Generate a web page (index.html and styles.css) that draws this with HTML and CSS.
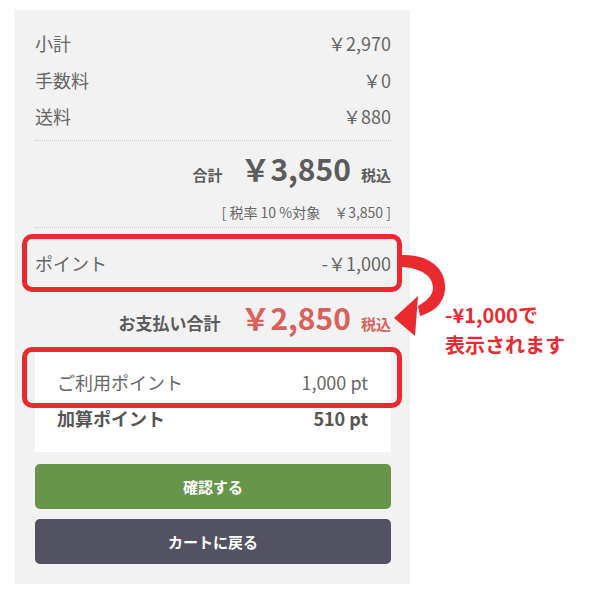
FILE: index.html
```html
<!DOCTYPE html>
<html lang="ja">
<head>
  <meta charset="UTF-8">
  <meta name="viewport" content="width=device-width, initial-scale=1.0">
  <title>ご注文内容</title>
  <link rel="stylesheet" href="styles.css">
</head>
<body>

  <div class="page">
    <div class="summary">
      <div class="row"><span>小計</span><span>￥2,970</span></div>
      <div class="row"><span>手数料</span><span>￥0</span></div>
      <div class="row"><span>送料</span><span>￥880</span></div>

      <div class="divider"></div>

      <div class="total">
        <span class="total-label">合計</span>
        <span class="total-price">￥3,850</span>
        <span class="total-tax">税込</span>
      </div>
      <p class="tax-note">[ 税率 10 %対象　￥3,850 ]</p>

      <div class="divider"></div>

      <div class="row point-row marked"><span>ポイント</span><span>-￥1,000</span></div>

      <div class="total pay">
        <span class="total-label">お支払い合計</span>
        <span class="total-price">￥2,850</span>
        <span class="total-tax">税込</span>
      </div>

      <div class="point-box">
        <div class="row used-row marked"><span>ご利用ポイント</span><span>1,000 pt</span></div>
        <div class="row strong"><span>加算ポイント</span><span>510 pt</span></div>
      </div>

      <div class="actions">
        <button class="btn btn-confirm">確認する</button>
        <button class="btn btn-back">カートに戻る</button>
      </div>
    </div>

    <svg class="arrow" width="60" height="90" viewBox="390 250 60 90">
      <path d="M402,255 C428,254 447,268 445,290 C443,305 433,312 420,316 L418,306 C427,301 433,295 433,288 C433,276 421,268 402,267 Z" fill="#ea2a2f"/>
      <path d="M394,318 L418,296 L415,336 Z" fill="#ea2a2f"/>
    </svg>

    <p class="note">-¥1,000で<br>表示されます</p>
  </div>

</body>
</html>
```

FILE: styles.css
```css
* {
  margin: 0;
  padding: 0;
  box-sizing: border-box;
}

body {
  background: #fff;
  font-family: "Noto Sans CJK JP", "Noto Sans", sans-serif;
  color: #666;
}

.page {
  position: relative;
  width: 600px;
  height: 600px;
  padding: 10px 0 0 15px;
}

.summary {
  width: 395px;
  background: #f2f2f2;
  padding: 15px 19px 20px 20px;
}

.row {
  display: flex;
  justify-content: space-between;
  font-size: 18px;
  line-height: 36.5px;
}

.divider {
  border-top: 1px dotted #c9c9c9;
  margin-top: 5px;
}

.total {
  display: flex;
  justify-content: flex-end;
  align-items: baseline;
  line-height: 40px;
  margin-top: 7px;
  color: #5c5c5c;
  font-weight: bold;
}

.total-label {
  font-size: 15px;
  margin-right: 18px;
}

.total-price {
  font-size: 30px;
  margin-right: 10px;
}

.total-tax {
  font-size: 15px;
}

.pay {
  margin-top: 16px;
}

.pay .total-label {
  font-size: 17px;
  margin-right: 20px;
}

.pay .total-price,
.pay .total-tax {
  color: #d8625a;
}

.tax-note {
  text-align: right;
  font-size: 14px;
  line-height: 20px;
  margin-top: 7px;
}

.point-row {
  margin-top: 17px;
}

.point-box {
  background: #fff;
  margin-top: 6px;
  padding: 14px 23px 16px 22px;
}

.point-box .row {
  line-height: 36px;
}

.strong {
  font-weight: bold;
  color: #555;
}

.marked {
  position: relative;
}

.marked::after {
  content: "";
  position: absolute;
  border: 5px solid #ea2a2f;
  border-radius: 10px;
}

.point-row::after {
  top: -11px;
  bottom: -11px;
  left: -13px;
  right: -11px;
}

.used-row::after {
  top: -17px;
  bottom: -8px;
  left: -35px;
  right: -34px;
}

.actions {
  display: flex;
  flex-direction: column;
  gap: 10px;
  margin-top: 12px;
}

.btn {
  -webkit-appearance: none;
  border: 0;
  border-radius: 5px;
  height: 45px;
  color: #fff;
  font-family: inherit;
  font-size: 15px;
  font-weight: bold;
  cursor: pointer;
}

.btn-confirm {
  background: #67964b;
}

.btn-back {
  background: #535261;
}

.arrow {
  position: absolute;
  left: 390px;
  top: 250px;
}

.note {
  position: absolute;
  left: 445px;
  top: 300px;
  color: #ea2a2f;
  font-size: 20px;
  font-weight: bold;
  line-height: 30px;
}
```
